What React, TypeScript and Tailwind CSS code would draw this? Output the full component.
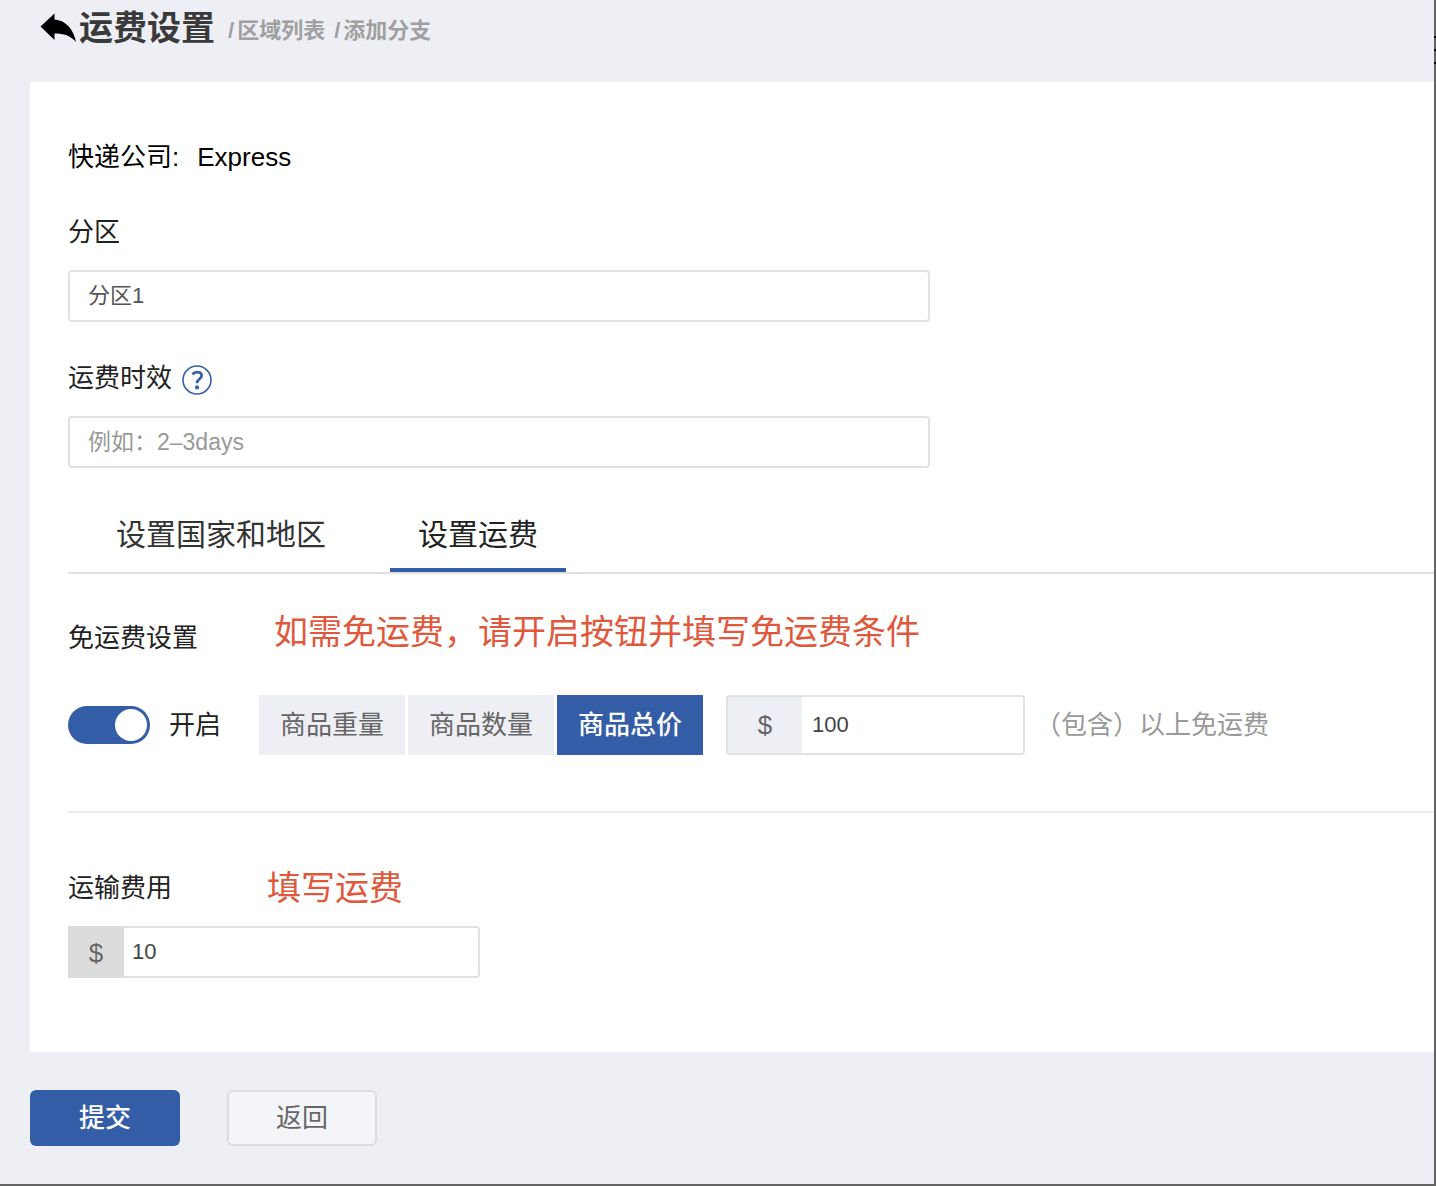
import { useState } from 'react';

const tabs = ['设置国家和地区', '设置运费'];
const conditions = ['商品重量', '商品数量', '商品总价'];

function BackIcon() {
  return (
    <svg viewBox="0 0 36 30" className="h-[30px] w-9" fill="currentColor" aria-hidden="true">
      <path d="M0.5 13.5 L14.5 0.5 V6.5 C26 7.5 33.5 16 36 29 C30.5 22.5 23.5 20.5 14.5 20.5 V27 Z" />
    </svg>
  );
}

function HelpIcon() {
  return (
    <svg viewBox="0 0 30 30" className="size-[30px]" fill="none" stroke="#3560ab" aria-hidden="true">
      <circle cx="15" cy="15" r="14" strokeWidth="1.6" />
      <path d="M10.4 9.2 C12 7.6 13.8 7 15.4 7.1 C18 7.2 19.6 8.6 19.6 10.7 C19.6 14 15 14.2 15 18.2" strokeWidth="2.8" />
      <circle cx="15" cy="22.4" r="2.1" fill="#3560ab" stroke="none" />
    </svg>
  );
}

export default function App() {
  const [tab, setTab] = useState(1);
  const [enabled, setEnabled] = useState(true);
  const [condition, setCondition] = useState(2);

  return (
    <div className="flex min-h-screen border-b-2 border-[#646466] bg-[#eeeff4] font-['Liberation_Sans','Noto_Sans_CJK_SC',sans-serif] text-[26px] leading-9 text-[#222]">
      <div className="flex min-w-0 flex-1 flex-col pl-[30px]">
        <header className="flex h-[82px] items-start pt-1 pl-[10px]">
          <a href="#back" aria-label="返回" className="mt-[9px] mr-[3px] text-black">
            <BackIcon />
          </a>
          <h1 className="text-[34px] leading-[48px] font-bold text-[#3a3a3a]">运费设置</h1>
          <nav className="mt-[9px] ml-[13px] flex gap-[9px] text-[22px] font-bold text-[#a0a0a0]">
            <a href="#regions" className="flex gap-[3px]">
              <span>/</span>
              <span>区域列表</span>
            </a>
            <a href="#branch" className="flex gap-[3px]">
              <span>/</span>
              <span>添加分支</span>
            </a>
          </nav>
        </header>

        <main className="bg-white pt-[57px] pb-[74px] pl-[38px]">
          <p className="flex gap-[18px] text-black">
            <span>快递公司:</span>
            <span>Express</span>
          </p>

          <label htmlFor="zone" className="mt-[39px] block">分区</label>
          <input
            id="zone"
            defaultValue="分区1"
            className="mt-5 block h-[52px] w-full max-w-[862px] rounded border-2 border-[#e2e2e2] bg-white px-[18px] pb-[6px] text-[22px] text-[#555] outline-none"
          />

          <div className="mt-[38px] flex items-center gap-[10px]">
            <label htmlFor="duration">运费时效</label>
            <button type="button" aria-label="帮助" className="pt-1">
              <HelpIcon />
            </button>
          </div>
          <input
            id="duration"
            placeholder="例如：2–3days"
            className="mt-5 block h-[52px] w-full max-w-[862px] rounded border-2 border-[#e2e2e2] bg-white px-[18px] text-[23px] text-[#555] outline-none placeholder:text-[#999]"
          />

          <div role="tablist" className="mt-8 flex gap-9 border-b-2 border-[#e0e0e0] pl-5 text-[30px]">
            {tabs.map((name, i) => (
              <button
                key={name}
                type="button"
                role="tab"
                aria-selected={tab === i}
                onClick={() => setTab(i)}
                className={`h-[72px] border-b-4 px-7 pt-[2px] ${tab === i ? 'border-[#345da7] text-[#222]' : 'border-transparent text-[#333]'}`}
              >
                {name}
              </button>
            ))}
          </div>

          <div className="mt-[34px] flex items-end gap-[76px]">
            <h2>免运费设置</h2>
            <p className="text-[34px] leading-[48px] text-[#e0583c]">如需免运费，请开启按钮并填写免运费条件</p>
          </div>

          <div className="mt-[39px] flex items-center">
            <label className="flex items-center gap-[19px]">
              <input
                type="checkbox"
                role="switch"
                checked={enabled}
                onChange={(e) => setEnabled(e.target.checked)}
                className="peer sr-only"
              />
              <span className="flex h-[38px] w-[82px] items-center justify-start rounded-full bg-[#bbb] px-[3px] peer-checked:justify-end peer-checked:bg-[#345da7]">
                <span className="size-8 rounded-full bg-white" />
              </span>
              开启
            </label>
            <div role="group" aria-label="免运费条件" className="ml-[38px] flex gap-[3px]">
              {conditions.map((name, i) => (
                <button
                  key={name}
                  type="button"
                  aria-pressed={condition === i}
                  onClick={() => setCondition(i)}
                  className={`h-[60px] w-[146px] ${condition === i ? 'bg-[#345da7] font-medium text-white' : 'bg-[#eeeff4] text-[#666]'}`}
                >
                  {name}
                </button>
              ))}
            </div>
            <div className="ml-[23px] flex h-[60px] w-[299px] overflow-hidden rounded border-2 border-[#e2e2e2]">
              <label htmlFor="threshold" className="flex w-[74px] items-center justify-center bg-[#eeeff4] text-[#666]">$</label>
              <input id="threshold" defaultValue="100" className="min-w-0 flex-1 bg-white px-[10px] text-[22px] text-[#444] outline-none" />
            </div>
            <span className="ml-[10px] whitespace-nowrap text-[#999]">（包含）以上免运费</span>
          </div>

          <hr className="mt-14 border-t-2 border-[#ebebeb]" />

          <div className="mt-[51px] flex items-center gap-[95px]">
            <label htmlFor="fee">运输费用</label>
            <p className="text-[34px] leading-[48px] text-[#e0583c]">填写运费</p>
          </div>
          <div className="mt-[14px] flex h-[52px] w-full max-w-[412px]">
            <span className="flex w-14 items-center justify-center bg-[#dcdcdc] pt-[2px] text-[#666]">$</span>
            <input
              id="fee"
              defaultValue="10"
              className="min-w-0 flex-1 rounded-r border-2 border-l-0 border-[#e2e2e2] bg-white px-2 text-[22px] text-[#444] outline-none"
            />
          </div>
        </main>

        <footer className="flex gap-[47px] pt-[38px] pb-[38px]">
          <button type="button" className="h-14 w-[150px] rounded-md bg-[#345da7] font-medium text-white">提交</button>
          <button type="button" className="h-14 w-[150px] rounded-md border-2 border-[#dddddf] bg-[#f4f5f9] text-[#666]">返回</button>
        </footer>
      </div>

      <div aria-hidden="true" className="flex w-[2px] flex-col gap-[11px] bg-[#646466] pt-9">
        <span className="h-[2px] bg-black" />
        <span className="h-[2px] bg-black" />
        <span className="h-[2px] bg-black" />
      </div>
    </div>
  );
}
